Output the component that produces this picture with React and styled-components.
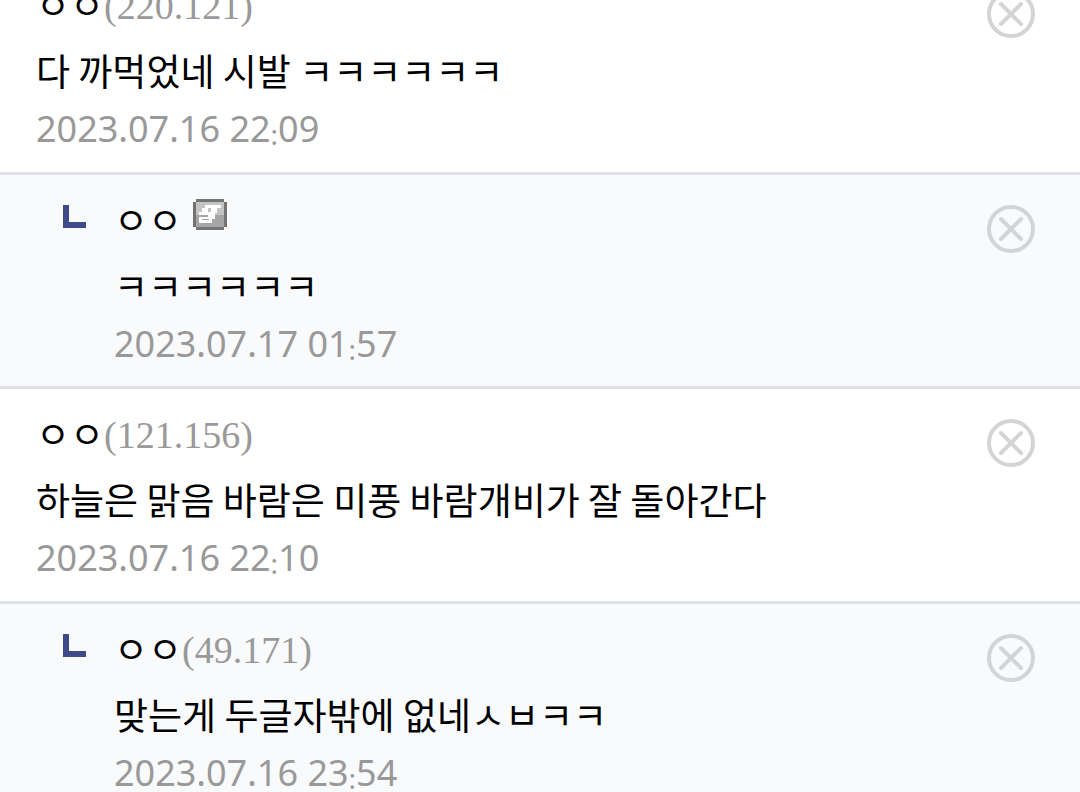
import React from 'react'
import styled, { createGlobalStyle } from 'styled-components'

const COLORS = {
  text: '#000',
  muted: '#999',
  line: '#dfe0e8',
  replyBg: '#f9fafc',
  arrow: '#3f4a8a',
  icon: '#d3d4d6',
}

const comments = [
  {
    id: 1,
    name: 'ㅇㅇ',
    ip: '220.121',
    text: '다 까먹었네 시발 ㅋㅋㅋㅋㅋㅋ',
    date: '2023.07.16 22:09',
  },
  {
    id: 2,
    reply: true,
    name: 'ㅇㅇ',
    member: true,
    text: 'ㅋㅋㅋㅋㅋㅋ',
    date: '2023.07.17 01:57',
  },
  {
    id: 3,
    name: 'ㅇㅇ',
    ip: '121.156',
    text: '하늘은 맑음 바람은 미풍 바람개비가 잘 돌아간다',
    date: '2023.07.16 22:10',
  },
  {
    id: 4,
    reply: true,
    name: 'ㅇㅇ',
    ip: '49.171',
    text: '맞는게 두글자밖에 없네ㅅㅂㅋㅋ',
    date: '2023.07.16 23:54',
  },
]

const ReplyArrow = () => (
  <Arrow viewBox='0 0 24 24' aria-hidden='true'>
    <path d='M0 0h6v17h17v6H0z' fill={COLORS.arrow} />
  </Arrow>
)

const MemberBadge = () => (
  <Badge viewBox='0 0 34 31' aria-hidden='true'>
    <path d='M3 0h28v3h3v25h-3v3H3v-3H0V3h3z' fill='#737373' />
    <path d='M3 3h28v13H3z' fill='#c4c4c4' />
    <path d='M3 16h28v12H3z' fill='#a6a6a6' />
    {/* pixel "g" */}
    <path
      d='M12 6h16v3h-4v5h-2v6h-3v4H6v-6h9v-2H6v-3h3V9h3zM15 9v4h3V9zM9 20v1h7v-1z'
      fill='#fff'
      fillRule='evenodd'
    />
  </Badge>
)

const Comment = ({ reply, name, ip, member, text, date }) => {
  const [hours, minutes] = date.split(':')

  return (
    <Row $reply={reply}>
      {reply && <ReplyArrow />}
      <Body>
        <Author>
          {name}
          {ip && <Ip>({ip})</Ip>}
          {member && <MemberBadge />}
        </Author>
        <Text>{text}</Text>
        <Time>
          {hours}
          <Colon>:</Colon>
          {minutes}
        </Time>
      </Body>
      <DeleteButton type='button' aria-label='삭제'>
        <svg viewBox='0 0 48 48' width='48' height='48' fill='none'>
          <circle cx='24' cy='24' r='22' stroke={COLORS.icon} strokeWidth='4' />
          <path
            d='M14 14l20 20M34 14L14 34'
            stroke={COLORS.icon}
            strokeWidth='4'
            strokeLinecap='round'
          />
        </svg>
      </DeleteButton>
    </Row>
  )
}

const App = () => (
  <>
    <GlobalStyle />
    <List>
      {comments.map((comment) => (
        <Comment key={comment.id} {...comment} />
      ))}
    </List>
  </>
)

const GlobalStyle = createGlobalStyle`
  body {
    margin: 0;
    overflow: hidden;
    background: #fff;
    color: ${COLORS.text};
    font-family: 'Noto Sans CJK KR', sans-serif;
  }
`
/* the list is scrolled a little past the top of its first comment */
const List = styled.ul`
  margin: -40px 0 0;
  padding: 0;
  list-style: none;
`
const Row = styled.li`
  display: flex;
  align-items: flex-start;
  padding: ${(p) => (p.$reply ? '20px 45px 16px 63px' : '20px 45px 17px 36px')};
  border-bottom: 3px solid ${COLORS.line};
  background: ${(p) => (p.$reply ? COLORS.replyBg : '#fff')};
`
const Arrow = styled.svg`
  flex: none;
  width: 24px;
  height: 24px;
  margin: 10px 27px 0 0;
`
const Body = styled.div`
  flex: 1;
  min-width: 0;
  line-height: 52px;
`
const Author = styled.div`
  display: flex;
  height: 52px;
  font-size: 37px;
  line-height: 48px;
`
const Ip = styled.span`
  color: ${COLORS.muted};
  font-family: 'Liberation Serif', serif;
  font-size: 38px;
  line-height: 52px;
`
const Badge = styled.svg`
  width: 34px;
  height: 31px;
  margin: 4px 0 0 11px;
`
const Text = styled.p`
  margin: 12px 0 7px;
  font-size: 37px;
`
const Time = styled.time`
  display: block;
  height: 52px;
  color: ${COLORS.muted};
  font-family: 'Noto Sans', sans-serif;
  font-size: 36px;
`
const Colon = styled.span`
  font-size: 28px;
  line-height: 1;
  vertical-align: -3px;
`
const DeleteButton = styled.button`
  flex: none;
  margin-top: 10px;
  padding: 0;
  border: 0;
  background: none;
  cursor: pointer;

  svg {
    display: block;
  }
`

export default App
